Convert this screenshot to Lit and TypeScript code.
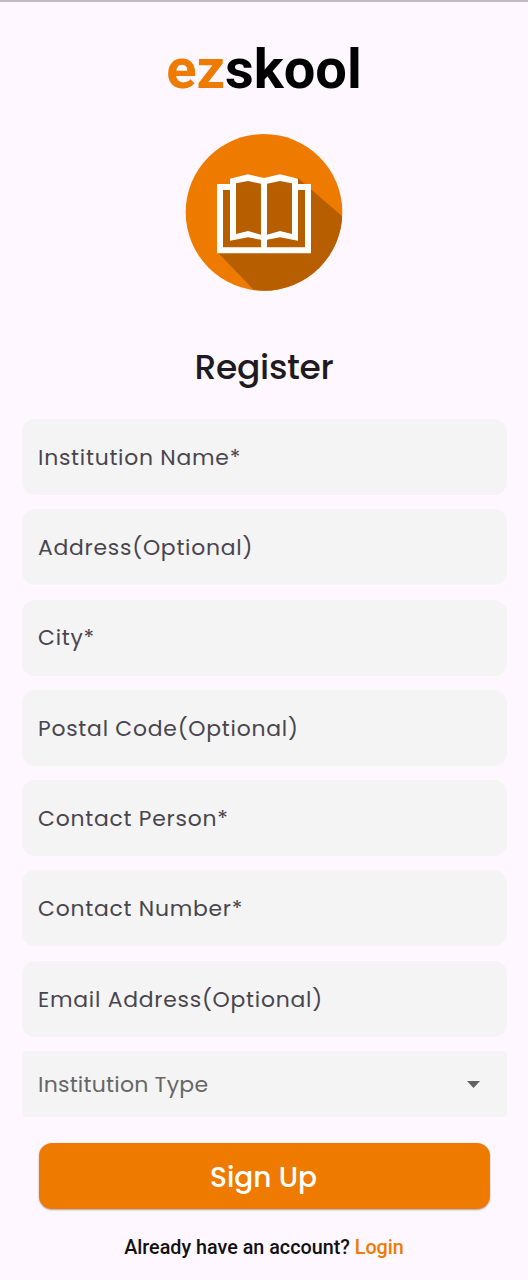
import { LitElement, html, css } from "lit";
import { customElement } from "lit/decorators.js";

const fields = [
  "Institution Name*",
  "Address(Optional)",
  "City*",
  "Postal Code(Optional)",
  "Contact Person*",
  "Contact Number*",
  "Email Address(Optional)",
];

@customElement("book-logo")
class BookLogo extends LitElement {
  static styles = css`
    :host { display: block; width: 180px; height: 180px; }
    svg { display: block; }
  `;
  render() {
    return html`<svg width="180" height="180" viewBox="0 0 540 540">
      <defs><clipPath id="disc"><circle cx="270" cy="271" r="235" /></clipPath></defs>
      <circle cx="270" cy="271" r="235" fill="#ee7b00" />
      <g clip-path="url(#disc)">
        <path fill="#b65e00" d="M372 168L520 296V540H274L132 392V200L186 178Z" />
      </g>
      <path fill="#fff" fill-rule="evenodd" d="M129 186H168V170L222 157L270 168L318 157L372 170V186H411V394H129Z
        M147 204V376H261V353L222 346L168 356V204Z
        M393 204V376H279V353L318 346L372 356V204Z
        M186 184L222 177L261 185V338L222 327L186 336Z
        M354 184L318 177L279 185V338L318 327L354 336Z" />
    </svg>`;
  }
}

@customElement("app-root")
class AppRoot extends LitElement {
  static styles = css`
    :host {
      display: flex; flex-direction: column; align-items: center;
      box-sizing: border-box; width: 528px; height: 1280px; overflow: hidden;
      background: #fef7ff; border-top: 2px solid #c1bac4;
      font-family: Poppins, Inter, sans-serif;
      font-feature-settings: "cv11";
    }
    .brand {
      margin: 34px 0 0; height: 66px;
      font: 700 56px/66px Roboto, sans-serif; color: #000; white-space: nowrap;
    }
    .accent { color: #ee7b00; }
    book-logo { margin-top: 20px; }
    h2 {
      margin: 41px 0 0; font-size: 34.5px; line-height: 48px; font-weight: 500;
      color: #1d1b20; letter-spacing: -0.3px;
    }
    form { width: 485px; margin-top: 28px; display: flex; flex-direction: column; gap: 14.3px; }
    .field {
      box-sizing: border-box; height: 76px; padding: 0.6px 16.5px 0; border-radius: 13px;
      display: flex; align-items: center; background: #f4f4f4;
      font-size: 21.9px; color: #49454f; letter-spacing: 0.75px; white-space: nowrap;
    }
    .select {
      height: 65.5px; border-radius: 4px; justify-content: space-between;
      padding: 1.5px 26.5px 0 16.5px; color: #666; letter-spacing: 0.22px; font-size: 22px;
    }
    .submit {
      width: 451px; height: 66px; margin: 12.5px auto 0; border: 0; padding: 3px 1px 0 0;
      border-radius: 13px; background: #ee7b00; color: #fff;
      font: 500 28px/63px Poppins, Inter, sans-serif; font-feature-settings: "cv11";
      box-shadow: 0 1px 2px rgba(0, 0, 0, 0.35);
    }
    .login {
      margin: 26.5px 0 0; font: 500 19.75px/24px Roboto, sans-serif; color: #111; white-space: nowrap;
    }
  `;
  render() {
    return html`
      <h1 class="brand"><span class="accent">ez</span>skool</h1>
      <book-logo></book-logo>
      <h2>Register</h2>
      <form>
        ${fields.map((label) => html`<div class="field">${label}</div>`)}
        <div class="field select">
          <span>Institution Type</span>
          <svg width="13" height="7" viewBox="0 0 13 7"><path d="M0 0H13L6.5 7Z" fill="#616161" /></svg>
        </div>
        <button class="submit" type="button">Sign Up</button>
      </form>
      <p class="login">Already have an account? <span class="accent">Login</span></p>
    `;
  }
}
